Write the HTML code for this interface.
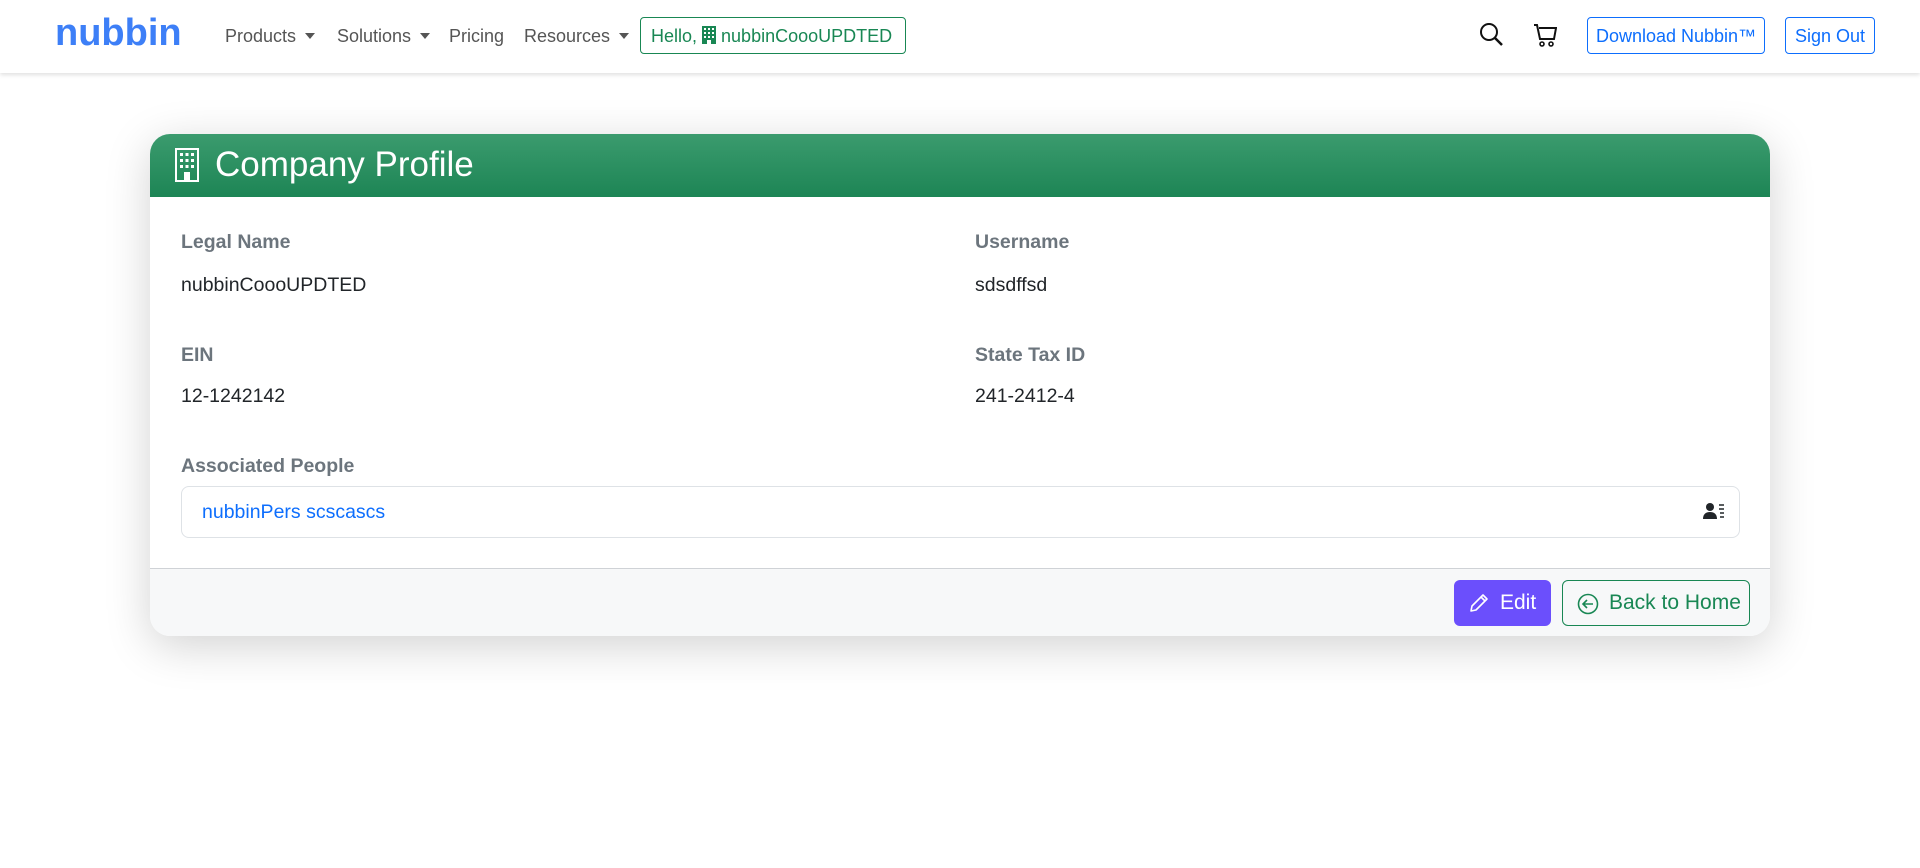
<!DOCTYPE html>
<html><head><meta charset="utf-8"><style>
*{box-sizing:border-box;margin:0;padding:0}
body{width:1920px;height:868px;background:#fff;font-family:"Liberation Sans",Arial,sans-serif;position:relative;overflow:hidden}
.nav{position:absolute;left:0;top:0;width:1920px;height:73px;background:#fff;box-shadow:0 2px 4px rgba(0,0,0,.12)}
.abs{position:absolute;white-space:nowrap}
.logo{left:55px;top:12px;font-size:38px;color:#3d7ff7;font-weight:bold;letter-spacing:0px}
.ni{top:26px;font-size:18px;color:#555}
.car{display:inline-block;border-left:5px solid transparent;border-right:5px solid transparent;border-top:6px solid #555;vertical-align:middle;margin-left:9px;margin-top:-3px}
.hello{left:640px;top:17px;width:266px;height:37px;border:1px solid #198754;border-radius:4px;color:#198754;font-size:18px;padding:8px 0 0 10px}
.bbtn{top:17px;height:37px;border:1px solid #0d6efd;border-radius:4px;color:#0d6efd;font-size:18px;padding:8px 0 0 0;text-align:center}
.card{position:absolute;left:150px;top:134px;width:1620px;height:502px;border-radius:20px;background:#fff;box-shadow:0 10px 45px rgba(0,0,0,.18);overflow:hidden}
.hd{height:63px;background:linear-gradient(#3b9b6e,#1d8555);color:#fff;font-size:35px;padding:11px 0 0 65px;position:relative}
.lbl{font-size:19.5px;font-weight:bold;color:#6c757d}
.val{font-size:19.5px;color:#212529}
.box{left:31px;top:352px;width:1559px;height:52px;border:1px solid #dee2e6;border-radius:8px}
.ft{position:absolute;left:0;top:434px;width:100%;height:68px;background:#f7f8f9;border-top:1px solid #cfd2d6}
</style></head><body>
<div class="nav">
<div class="abs logo">nubbin</div>
<div class="abs ni" style="left:225px">Products<span class="car"></span></div>
<div class="abs ni" style="left:337px">Solutions<span class="car"></span></div>
<div class="abs ni" style="left:449px">Pricing</div>
<div class="abs ni" style="left:524px">Resources<span class="car"></span></div>
<div class="abs hello">Hello, <svg width="14" height="18" viewBox="0 0 14 18" style="vertical-align:-2px"><rect x="0" y="0" width="14" height="18" fill="#198754"/><g fill="#fff"><rect x="2" y="2" width="2" height="2"/><rect x="6" y="2" width="2" height="2"/><rect x="10" y="2" width="2" height="2"/><rect x="2" y="6" width="2" height="2"/><rect x="6" y="6" width="2" height="2"/><rect x="10" y="6" width="2" height="2"/><rect x="2" y="10" width="2" height="2"/><rect x="6" y="10" width="2" height="2"/><rect x="10" y="10" width="2" height="2"/><rect x="5" y="14" width="4" height="4"/></g></svg> nubbinCoooUPDTED</div>
<svg class="abs" style="left:1479px;top:22px" width="26" height="26" viewBox="0 0 26 26"><circle cx="10" cy="10" r="8" fill="none" stroke="#111" stroke-width="2"/><line x1="16" y1="16" x2="23" y2="23" stroke="#111" stroke-width="2.5"/></svg>
<svg class="abs" style="left:1533px;top:23px" width="24" height="25" viewBox="0 0 24 25"><path d="M1 2h3l3 14h14l2-11H6" fill="none" stroke="#111" stroke-width="2"/><circle cx="9" cy="21" r="2" fill="none" stroke="#111" stroke-width="1.6"/><circle cx="18" cy="21" r="2" fill="none" stroke="#111" stroke-width="1.6"/></svg>
<div class="abs bbtn" style="left:1587px;width:178px">Download Nubbin™</div>
<div class="abs bbtn" style="left:1785px;width:90px">Sign Out</div>
</div>
<div class="card">
<div class="hd"><svg style="position:absolute;left:25px;top:14px" width="24" height="34" viewBox="0 0 24 34"><rect x="1" y="1" width="22" height="32" fill="none" stroke="#fff" stroke-width="2"/><g fill="#fff"><rect x="5" y="5" width="3" height="3"/><rect x="10.5" y="5" width="3" height="3"/><rect x="16" y="5" width="3" height="3"/><rect x="5" y="11" width="3" height="3"/><rect x="10.5" y="11" width="3" height="3"/><rect x="16" y="11" width="3" height="3"/><rect x="5" y="17" width="3" height="3"/><rect x="10.5" y="17" width="3" height="3"/><rect x="16" y="17" width="3" height="3"/><rect x="9" y="24" width="6" height="9"/></g></svg>Company Profile</div>
<div class="abs lbl" style="left:31px;top:97px">Legal Name</div>
<div class="abs val" style="left:31px;top:140px">nubbinCoooUPDTED</div>
<div class="abs lbl" style="left:825px;top:97px">Username</div>
<div class="abs val" style="left:825px;top:140px">sdsdffsd</div>
<div class="abs lbl" style="left:31px;top:210px">EIN</div>
<div class="abs val" style="left:31px;top:251px">12-1242142</div>
<div class="abs lbl" style="left:825px;top:210px">State Tax ID</div>
<div class="abs val" style="left:825px;top:251px">241-2412-4</div>
<div class="abs lbl" style="left:31px;top:321px">Associated People</div>
<div class="abs box"><span class="abs" style="left:20px;top:14px;font-size:19.5px;color:#0d6efd">nubbinPers scscascs</span>
<svg class="abs" style="left:1521px;top:15px" width="22" height="18" viewBox="0 0 22 18"><circle cx="7" cy="5" r="4" fill="#212529"/><path d="M0 17c0-5 3-7 7-7s7 2 7 7z" fill="#212529"/><g stroke="#212529" stroke-width="1.5"><line x1="16" y1="3" x2="21" y2="3"/><line x1="16" y1="7" x2="21" y2="7"/><line x1="17" y1="11" x2="21" y2="11"/><line x1="17" y1="15" x2="21" y2="15"/></g></svg></div>
<div class="ft">
<div class="abs" style="left:1304px;top:11px;width:97px;height:46px;background:#6b4ffc;border-radius:6px;color:#fff;font-size:21px;padding:11px 0 0 46px"><svg class="abs" style="left:15px;top:13px" width="20" height="20" viewBox="0 0 20 20"><path d="M14 2l4 4L7 17l-5 1 1-5z M12 4l4 4" fill="none" stroke="#fff" stroke-width="1.6" stroke-linejoin="round"/></svg>Edit</div>
<div class="abs" style="left:1412px;top:11px;width:188px;height:46px;border:1px solid #198754;border-radius:6px;color:#198754;font-size:21px;padding:10px 0 0 46px"><svg class="abs" style="left:14px;top:12px" width="22" height="22" viewBox="0 0 22 22"><circle cx="11" cy="11" r="9.5" fill="none" stroke="#198754" stroke-width="1.6"/><path d="M16 11H6M10 7l-4 4 4 4" fill="none" stroke="#198754" stroke-width="1.6"/></svg>Back to Home</div>
</div>
</div>
</body></html>
